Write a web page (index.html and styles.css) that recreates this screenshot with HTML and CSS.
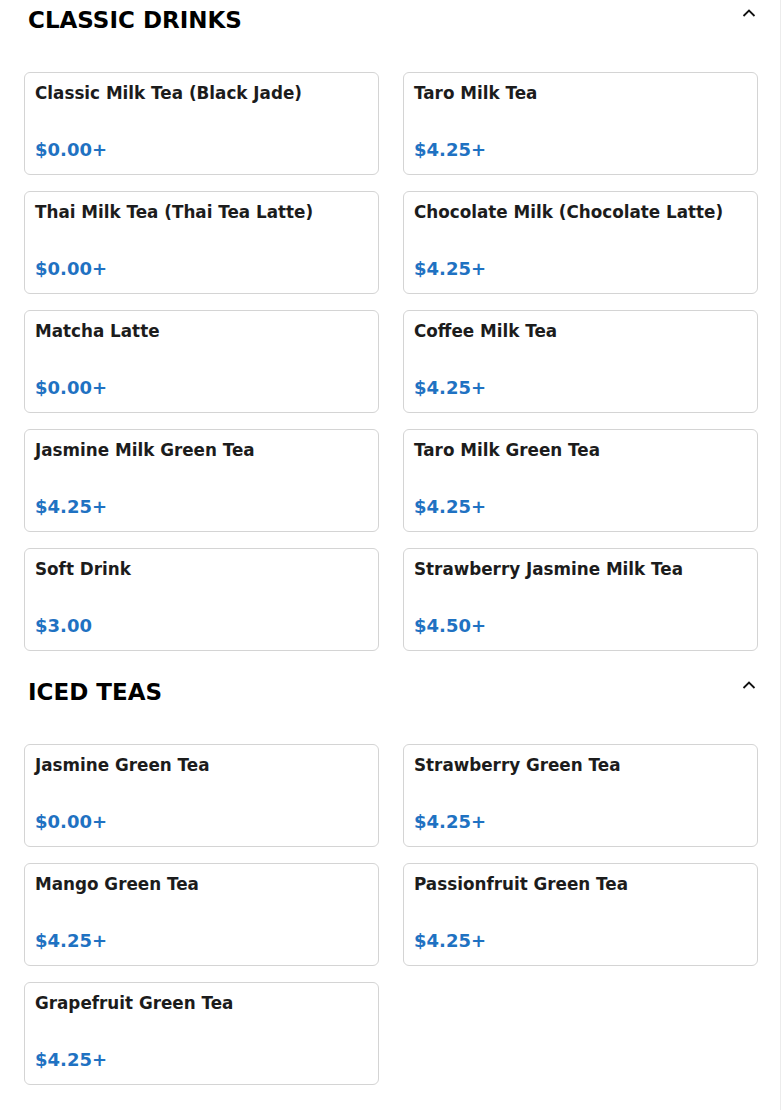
FILE: index.html
```html
<!DOCTYPE html>
<html lang="en">
<head>
    <meta charset="UTF-8">
    <meta name="viewport" content="width=device-width, initial-scale=1.0">
    <title>Menu</title>
    <link rel="stylesheet" href="styles.css">
</head>
<body>
    <div class="page">
        <section class="menu-section">
            <div class="section-header">
                <h2 class="section-title">CLASSIC DRINKS</h2>
                <button class="collapse-button">
                    <svg width="14" height="8" viewBox="0 0 14 8"><path d="M1.5 7 L7 1.5 L12.5 7" fill="none" stroke="#111" stroke-width="1.8"/></svg>
                </button>
            </div>
            <div class="item-grid">
                <div class="item-card">
                    <strong class="item-name">Classic Milk Tea (Black Jade)</strong>
                    <strong class="item-price">$0.00+</strong>
                </div>
                <div class="item-card">
                    <strong class="item-name">Taro Milk Tea</strong>
                    <strong class="item-price">$4.25+</strong>
                </div>
                <div class="item-card">
                    <strong class="item-name">Thai Milk Tea (Thai Tea Latte)</strong>
                    <strong class="item-price">$0.00+</strong>
                </div>
                <div class="item-card">
                    <strong class="item-name">Chocolate Milk (Chocolate Latte)</strong>
                    <strong class="item-price">$4.25+</strong>
                </div>
                <div class="item-card">
                    <strong class="item-name">Matcha Latte</strong>
                    <strong class="item-price">$0.00+</strong>
                </div>
                <div class="item-card">
                    <strong class="item-name">Coffee Milk Tea</strong>
                    <strong class="item-price">$4.25+</strong>
                </div>
                <div class="item-card">
                    <strong class="item-name">Jasmine Milk Green Tea</strong>
                    <strong class="item-price">$4.25+</strong>
                </div>
                <div class="item-card">
                    <strong class="item-name">Taro Milk Green Tea</strong>
                    <strong class="item-price">$4.25+</strong>
                </div>
                <div class="item-card">
                    <strong class="item-name">Soft Drink</strong>
                    <strong class="item-price">$3.00</strong>
                </div>
                <div class="item-card">
                    <strong class="item-name">Strawberry Jasmine Milk Tea</strong>
                    <strong class="item-price">$4.50+</strong>
                </div>
            </div>
        </section>
        <section class="menu-section">
            <div class="section-header">
                <h2 class="section-title">ICED TEAS</h2>
                <button class="collapse-button">
                    <svg width="14" height="8" viewBox="0 0 14 8"><path d="M1.5 7 L7 1.5 L12.5 7" fill="none" stroke="#111" stroke-width="1.8"/></svg>
                </button>
            </div>
            <div class="item-grid">
                <div class="item-card">
                    <strong class="item-name">Jasmine Green Tea</strong>
                    <strong class="item-price">$0.00+</strong>
                </div>
                <div class="item-card">
                    <strong class="item-name">Strawberry Green Tea</strong>
                    <strong class="item-price">$4.25+</strong>
                </div>
                <div class="item-card">
                    <strong class="item-name">Mango Green Tea</strong>
                    <strong class="item-price">$4.25+</strong>
                </div>
                <div class="item-card">
                    <strong class="item-name">Passionfruit Green Tea</strong>
                    <strong class="item-price">$4.25+</strong>
                </div>
                <div class="item-card">
                    <strong class="item-name">Grapefruit Green Tea</strong>
                    <strong class="item-price">$4.25+</strong>
                </div>
            </div>
        </section>
    </div>
</body>
</html>
```

FILE: styles.css
```css
body {
    margin: 0;
    padding: 0;
    background-color: white;
    font-family: "DejaVu Sans", sans-serif;
}

.page {
    width: 782px;
    min-height: 1110px;
    padding-top: 1px;
    box-sizing: border-box;
    background: linear-gradient(to left, white 1px, #ececec 1px, #ececec 2px, white 2px);
}

.menu-section {
    padding: 0 24px;
    margin-bottom: 22px;
}

.section-header {
    height: 40px;
    margin-top: -1px;
    display: flex;
    justify-content: space-between;
    align-items: center;
    padding: 0 2px 0 4px;
    margin-bottom: 32px;
}

.section-title {
    margin: 0;
    font-size: 23px;
    font-weight: bold;
    color: black;
}

.collapse-button {
    background: none;
    border: none;
    padding: 0;
    width: 14px;
    height: 8px;
    display: flex;
    align-self: flex-start;
    margin-top: 9px;
}

.item-grid {
    display: grid;
    grid-template-columns: 1fr 1fr;
    column-gap: 24px;
    row-gap: 16px;
}

.item-card {
    height: 103px;
    box-sizing: border-box;
    border: 1px solid #d4d4d4;
    border-radius: 6px;
    padding: 11px 10px 14px 10px;
    display: flex;
    flex-direction: column;
    justify-content: space-between;
}

.item-name {
    font-size: 16.8px;
    line-height: 19px;
    color: #1c1c1c;
}

.item-price {
    font-size: 18px;
    line-height: 21px;
    color: #1f72c2;
}
```
